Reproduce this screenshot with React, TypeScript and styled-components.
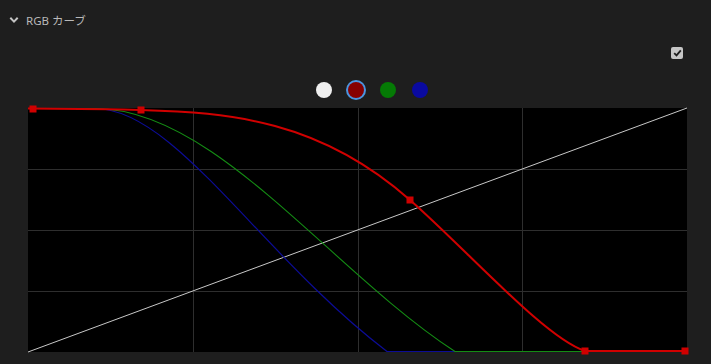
import React from "react";
import styled, { createGlobalStyle } from "styled-components";

const W = 659;
const H = 244;
const OX = 28;
const OY = 108;

type Pt = [number, number];

// curves described in page coordinates, converted into the chart box
const p = ([x, y]: Pt) => `${(x - OX).toFixed(1)},${(y - OY).toFixed(1)}`;

function bezierPath(start: Pt, segs: Pt[][]): string {
  let d = `M${p(start)}`;
  segs.forEach((s) => {
    d += s.length === 1 ? ` L${p(s[0])}` : ` C${p(s[0])} ${p(s[1])} ${p(s[2])}`;
  });
  return d;
}

const redPath = bezierPath(
  [28, 108.6],
  [
    [[70, 108.7], [110, 109.4], [140, 110]],
    [[230, 112.4], [320, 120.3], [410, 200]],
    [[468, 251], [545, 338], [585, 351]],
    [[687, 351]],
  ]
);

const greenPath = bezierPath(
  [28, 108.5],
  [
    [[95, 108.5]],
    [[215, 108.5], [330, 270], [455, 351.5]],
    [[687, 351.5]],
  ]
);

const bluePath = bezierPath(
  [28, 108.5],
  [
    [[95, 108.5]],
    [[175, 108.5], [260, 255], [387, 351.5]],
    [[687, 351.5]],
  ]
);

const redKnots: Pt[] = [
  [33, 109],
  [141, 110],
  [410, 200],
  [585, 351],
  [685, 351],
];

const GlobalStyle = createGlobalStyle`
  html, body {
    margin: 0;
    padding: 0;
    background: #1e1e1e;
    font-family: "Noto Sans", "Noto Sans CJK JP", sans-serif;
    overflow: hidden;
  }
`;

const Panel = styled.div`
  width: 711px;
  height: 364px;
  background: #1e1e1e;
  display: flex;
  flex-direction: column;
`;

const Header = styled.div`
  height: 40px;
  display: flex;
  align-items: center;
  padding-left: 9px;
  gap: 7px;
  color: #b9b9b9;
  font-size: 11.5px;
  font-family: "Noto Sans", "Noto Sans CJK JP", sans-serif;
  box-sizing: border-box;
  padding-bottom: 1px;
`;

const CheckRow = styled.div`
  height: 12px;
  margin-top: 7px;
  display: flex;
  justify-content: flex-end;
  padding-right: 28px;
`;

const CheckBox = styled.div`
  width: 12px;
  height: 12px;
  border-radius: 2px;
  background: #c6c6c6;
  display: flex;
  align-items: center;
  justify-content: center;
`;

const Swatches = styled.div`
  height: 16px;
  margin-top: 23px;
  display: flex;
  gap: 16px;
  padding-left: 316px;
`;

const Swatch = styled.div<{ $color: string; $active?: boolean }>`
  width: 16px;
  height: 16px;
  border-radius: 50%;
  background: ${(p) => p.$color};
  box-shadow: ${(p) => (p.$active ? "0 0 0 2px #4b95e0" : "none")};
`;

const Chart = styled.div`
  margin-top: 10px;
  margin-left: ${OX}px;
  width: ${W}px;
  height: ${H}px;
  background: #000;
`;

const Svg = styled.svg`
  display: block;
  overflow: visible;
`;

export default function App() {
  const gridX = [1, 2, 3].map((i) => Math.round((W * i) / 4) + 0.5);
  const gridY = [1, 2, 3].map((i) => Math.round((H * i) / 4) + 0.5);
  return (
    <Panel>
      <GlobalStyle />
      <Header>
        <svg width="10" height="8" viewBox="0 0 10 8">
          <path d="M1.3 1.8 L5 5.6 L8.7 1.8" fill="none" stroke="#c4c4c4" strokeWidth="2" />
        </svg>
        <span>RGB カーブ</span>
      </Header>
      <CheckRow>
        <CheckBox>
          <svg width="9" height="8" viewBox="0 0 9 8">
            <path d="M1.2 4.2 L3.5 6.4 L7.8 1.4" fill="none" stroke="#1e1e1e" strokeWidth="1.8" />
          </svg>
        </CheckBox>
      </CheckRow>
      <Swatches>
        <Swatch $color="#efefef" />
        <Swatch $color="#860000" $active />
        <Swatch $color="#057a05" />
        <Swatch $color="#0a0aa0" />
      </Swatches>
      <Chart>
        <Svg width={W} height={H} viewBox={`0 0 ${W} ${H}`}>
          {gridX.map((x) => (
            <line key={"x" + x} x1={x} y1={0} x2={x} y2={H} stroke="#2e2e2e" strokeWidth="1" />
          ))}
          {gridY.map((y) => (
            <line key={"y" + y} x1={0} y1={y} x2={W} y2={y} stroke="#2e2e2e" strokeWidth="1" />
          ))}
          <line x1={0} y1={H} x2={W} y2={0} stroke="#c8c8c8" strokeWidth="1" />
          <path d={bluePath} fill="none" stroke="#0c0c96" strokeWidth="1.2" />
          <path d={greenPath} fill="none" stroke="#148c14" strokeWidth="1.1" />
          <path d={redPath} fill="none" stroke="#d00000" strokeWidth="2" />
          {redKnots.map(([x, y]) => (
            <rect key={x} x={x - OX - 3.5} y={y - OY - 3.5} width="7" height="7" fill="#d00000" />
          ))}
        </Svg>
      </Chart>
    </Panel>
  );
}
